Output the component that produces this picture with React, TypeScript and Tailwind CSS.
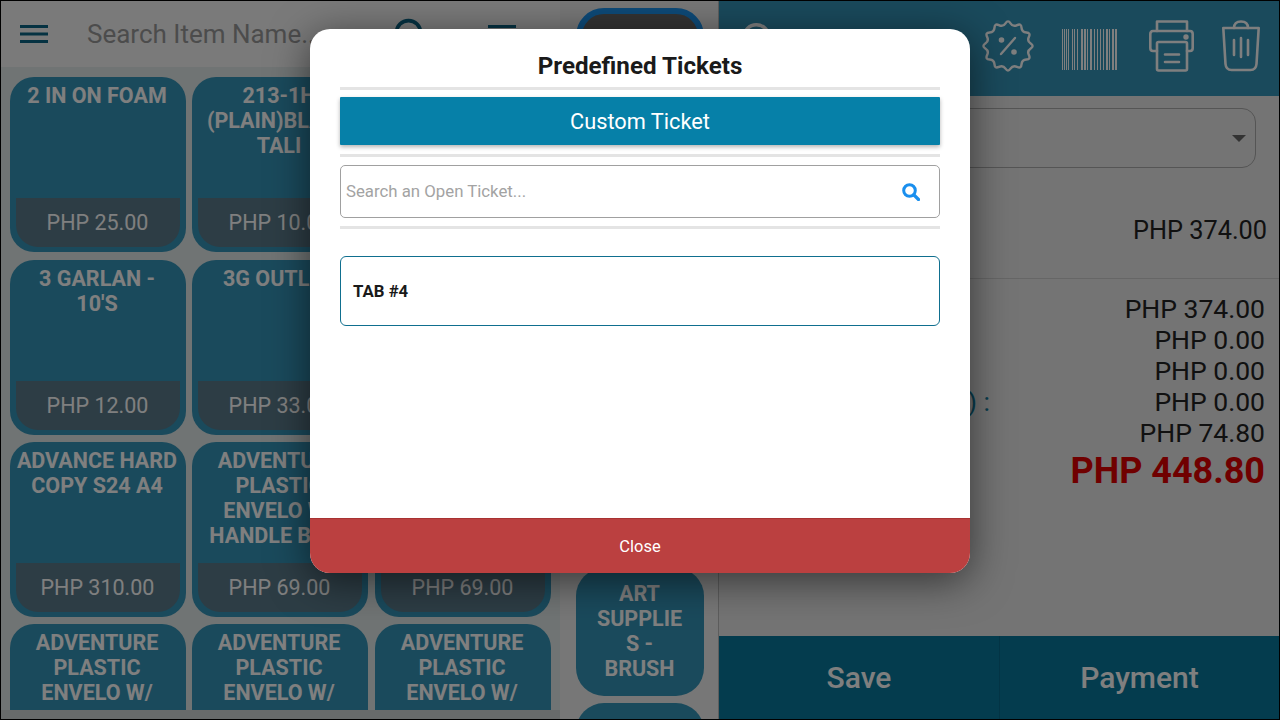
import React from 'react';
import { Search } from 'lucide-react';

interface Item {
  title?: string;
  price?: string;
}

const items: Item[] = [
  { title: '2 IN ON FOAM', price: 'PHP 25.00' },
  { title: '213-1H\n(PLAIN)BLACK\nTALI', price: 'PHP 10.00' },
  {},
  { title: "3 GARLAN -\n10'S", price: 'PHP 12.00' },
  { title: '3G OUTLET', price: 'PHP 33.00' },
  {},
  { title: 'ADVANCE HARD COPY S24 A4', price: 'PHP 310.00' },
  { title: 'ADVENTURE PLASTIC ENVELO W/ HANDLE BLUE', price: 'PHP 69.00' },
  { price: 'PHP 69.00' },
  { title: 'ADVENTURE PLASTIC ENVELO W/' },
  { title: 'ADVENTURE PLASTIC ENVELO W/' },
  { title: 'ADVENTURE PLASTIC ENVELO W/' },
];

const totals = ['PHP 374.00', 'PHP 0.00', 'PHP 0.00', 'PHP 0.00', 'PHP 74.80'];

const Hamburger = () => (
  <svg width="28" height="18" viewBox="0 0 28 18" className="shrink-0 text-[#0a6484]">
    <rect x="0" y="0" width="28" height="3" fill="currentColor" />
    <rect x="0" y="7.5" width="28" height="3" fill="currentColor" />
    <rect x="0" y="15" width="28" height="3" fill="currentColor" />
  </svg>
);

// 12 lobed burst for the discount button, tips and valleys are rounded off
const burstPoint = (i: number) => {
  const r = i % 2 === 0 ? 26.5 : 19.5;
  const a = (i * Math.PI) / 12 - Math.PI / 2;
  return [27 + r * Math.cos(a), 27 + r * Math.sin(a)];
};
const mid = (p: number[], q: number[]) => `${((p[0] + q[0]) / 2).toFixed(1)} ${((p[1] + q[1]) / 2).toFixed(1)}`;
const burstPath =
  `M${mid(burstPoint(23), burstPoint(0))} ` +
  Array.from({ length: 24 }, (_, i) => {
    const p = burstPoint(i);
    return `Q${p[0].toFixed(1)} ${p[1].toFixed(1)} ${mid(p, burstPoint(i + 1))}`;
  }).join(' ') +
  ' Z';

const DiscountIcon = () => (
  <svg width="54" height="54" viewBox="0 0 54 54" fill="none" stroke="white" strokeWidth="2.4" strokeLinejoin="round" strokeLinecap="round">
    <path d={burstPath} />
    <path d="M20 35 L34 19" />
    <circle cx="20.5" cy="21" r="1.6" fill="white" />
    <circle cx="33" cy="33" r="1.6" fill="white" />
  </svg>
);

const barcodeBars = [
  [0, 1], [2, 1], [4, 1], [6, 1], [10, 1], [12, 1], [15, 1], [19, 1], [20, 1], [22, 2], [25, 1], [28, 2],
  [32, 1], [35, 1], [38, 1], [41, 1], [44, 2], [47, 1], [50, 2], [53, 2],
];

const BarcodeIcon = () => (
  <svg width="55" height="41" viewBox="0 0 55 41" fill="white">
    {barcodeBars.map(([x, w]) => (
      <rect key={x} x={x} y="0" width={w} height="41" />
    ))}
  </svg>
);

const PrinterIcon = () => (
  <svg width="45" height="52" viewBox="0 0 45 52" fill="none" stroke="white" strokeWidth="2.6" strokeLinejoin="round" strokeLinecap="round">
    <path d="M8 11 V1.5 H38 V11" />
    <path d="M8 31 H4 Q1.3 31 1.3 28 V14 Q1.3 11 4 11 H41 Q43.7 11 43.7 14 V28 Q43.7 31 41 31 H38" />
    <rect x="8" y="22" width="30" height="28.5" rx="1.5" />
    <path d="M16 34.5 H30 M16 42 H30" />
    <circle cx="37" cy="17" r="1.4" fill="white" />
  </svg>
);

const TrashIcon = () => (
  <svg width="38" height="52" viewBox="0 0 38 52" fill="none" stroke="white" strokeWidth="2.6" strokeLinejoin="round" strokeLinecap="round">
    <path d="M1.3 8 H36.7 L34.5 44 Q34 50 28.5 50 H9.5 Q4 50 3.5 44 Z" />
    <path d="M12 8 Q12 1.5 19 1.5 Q26 1.5 26 8" />
    <path d="M12 20 V35 M19 18 V37 M26 20 V35" />
  </svg>
);

const TicketSearchIcon = () => (
  <svg width="18" height="18" viewBox="0 0 18 18" fill="none" stroke="#1a8fee" strokeLinecap="round" className="shrink-0">
    <circle cx="7.5" cy="7.5" r="5.8" strokeWidth="3" />
    <path d="M12 12 L16.5 16.5" strokeWidth="3.2" />
  </svg>
);

const ItemCard = ({ title, price }: Item) => (
  <div className="flex h-[175px] w-[176px] flex-col justify-between rounded-[24px] bg-[#3494b8] px-[6px] pb-[5px] pt-[6px] text-white">
    <div className="whitespace-pre-line pr-[2px] text-center text-[21.5px] font-bold leading-[25px]">{title}</div>
    {price && (
      <div className="flex h-[49px] shrink-0 items-center justify-center rounded-b-[22px] bg-[#5a7a8a] pr-[1px] text-[21.5px] leading-none">
        {price}
      </div>
    )}
  </div>
);

export default function App() {
  return (
    <div className="relative flex h-[720px] w-[1280px] overflow-hidden border border-black bg-[#eeeeee] font-[Roboto,sans-serif]">
      {/* Items */}
      <div className="flex h-full w-[559px] shrink-0 flex-col">
        <div className="flex h-[66px] shrink-0 items-center bg-[#f4f4f4] pl-[19px]">
          <Hamburger />
          <input
            className="ml-[39px] w-[300px] bg-transparent text-[26px] outline-none placeholder:text-[#999999]"
            placeholder="Search Item Name..."
          />
          <Search size={36} strokeWidth={2.5} className="ml-[5px] shrink-0 text-[#0a6484]" />
          <div className="ml-[60px]">
            <Hamburger />
          </div>
        </div>
        <div className="flex-1 overflow-hidden bg-[#e0e8e8] pl-[9px] pt-[10px]">
          <div className="grid grid-cols-[182px_183px_176px] grid-rows-[183px_182px_182px_175px]">
            {items.map((item, index) => (
              <ItemCard key={index} title={item.title} price={item.price} />
            ))}
          </div>
        </div>
        <div className="h-[9px] shrink-0 bg-[#d0d6d6]" />
      </div>

      {/* Categories */}
      <div className="flex h-full w-[159px] shrink-0 flex-col gap-[7px] overflow-hidden border-r border-[#bbbbbb] pl-[16px] pt-[7px]">
        <div className="h-[148px] w-[128px] shrink-0 rounded-[28px] border-[6px] border-[#1a94f0] bg-[#666666]" />
        <div className="h-[128px] w-[128px] shrink-0 rounded-[28px] bg-[#3494b8]" />
        <div className="h-[128px] w-[128px] shrink-0 rounded-[28px] bg-[#3494b8]" />
        <div className="h-[128px] w-[128px] shrink-0 rounded-[28px] bg-[#3494b8]" />
        <div className="flex h-[128px] w-[128px] shrink-0 items-end justify-center rounded-[28px] bg-[#3494b8] pb-[15px] pr-[1px] text-center text-[21.5px] font-bold leading-[25px] text-white">
          <span>
            ART
            <br />
            SUPPLIE
            <br />
            S -
            <br />
            BRUSH
          </span>
        </div>
        <div className="h-[128px] w-[128px] shrink-0 rounded-[28px] bg-[#3494b8]" />
      </div>

      {/* Order panel */}
      <div className="flex h-full min-w-0 flex-1 flex-col bg-[#e8e8e8]">
        <div className="flex h-[95px] shrink-0 items-center bg-[#3494b8] pb-[5px] pl-[20px] pr-[19px]">
          <Search size={38} strokeWidth={2.2} className="mb-[14px] text-white" />
          <div className="ml-auto flex items-center gap-[28px]">
            <div className="mr-[-1px]">
              <DiscountIcon />
            </div>
            <div className="mt-[7px]">
              <BarcodeIcon />
            </div>
            <div className="ml-[4px]">
              <PrinterIcon />
            </div>
            <TrashIcon />
          </div>
        </div>

        <div className="ml-[20px] mr-[23px] mt-[12px] flex h-[60px] shrink-0 items-center justify-end rounded-[14px] border border-[#aaaaaa] pr-[9px]">
          <svg width="14" height="7" viewBox="0 0 14 7">
            <path d="M0 0 H14 L7 7 Z" fill="#666666" />
          </svg>
        </div>

        <div className="flex h-[111px] shrink-0 items-center justify-end border-b border-[#cccccc] pr-[12px] text-[25.3px] text-[#222222]">
          <span className="mt-[16px]">PHP 374.00</span>
        </div>

        <div className="pr-[14px] pt-[14px] text-[26.5px] leading-[31px] text-[#222222]">
          {totals.map((value, index) => (
            <div key={index} className="flex justify-between">
              <span className="w-[271px] text-right text-[#0f7a9c]">{index === 3 ? ') :' : ''}</span>
              <span>{value}</span>
            </div>
          ))}
          <div className="mt-[1px] text-right text-[36px] font-bold leading-[44px] text-[#e00000]">PHP 448.80</div>
        </div>

        <div className="mt-auto flex h-[83px] shrink-0 bg-[#08789c] text-[30px] font-medium text-white">
          <div className="flex w-[281px] items-center justify-center border-r border-[#06688a]">Save</div>
          <div className="flex flex-1 items-center justify-center">Payment</div>
        </div>
      </div>

      {/* Dialog */}
      <div className="absolute inset-0 z-10 bg-black/50" />
      <div className="absolute left-[309px] top-[28px] z-20 flex h-[544px] w-[660px] flex-col overflow-hidden rounded-[20px] bg-white shadow-[0_8px_40px_rgba(0,0,0,0.55)]">
        <div className="flex flex-1 flex-col px-[30px]">
          <h2 className="pt-[22px] text-center text-[24.2px] font-bold leading-[30px] text-[#1a1a1a]">Predefined Tickets</h2>
          <div className="mt-[6px] h-[3px] bg-[#e4e4e4]" />
          <button className="mt-[7px] h-[48px] rounded-[1px] bg-[#0680a8] pt-[3px] text-[21.75px] text-white shadow-[0_2px_4px_rgba(0,0,0,0.3)]">
            Custom Ticket
          </button>
          <div className="mt-[9px] h-[3px] bg-[#e4e4e4]" />
          <div className="mt-[8px] flex h-[53px] items-center rounded-[5px] border border-[#a0a0a0] pl-[5px] pr-[19px]">
            <input
              className="min-w-0 flex-1 bg-transparent text-[16.8px] outline-none placeholder:text-[#a3a3a3]"
              placeholder="Search an Open Ticket..."
            />
            <TicketSearchIcon />
          </div>
          <div className="mt-[8px] h-[3px] bg-[#e4e4e4]" />
          <div className="mt-[27px] flex h-[70px] items-center rounded-[6px] border border-[#0f6f8f] pl-[12px] pt-[2px] text-[16.8px] font-bold text-[#1a1a1a]">
            TAB #4
          </div>
        </div>
        <div className="flex h-[55px] shrink-0 items-center justify-center border-t border-[#a83232] bg-[#bb4040] pt-[2px] text-[16.5px] text-white">
          Close
        </div>
      </div>
    </div>
  );
}
